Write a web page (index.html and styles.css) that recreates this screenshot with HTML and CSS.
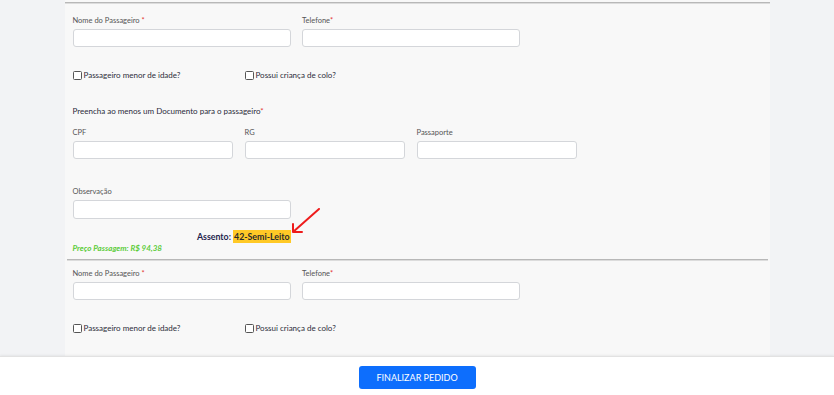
FILE: index.html
```html
<!DOCTYPE html>
<html lang="pt-BR">
<head>
  <meta charset="UTF-8" />
  <meta name="viewport" content="width=device-width, initial-scale=1.0" />
  <title>Dados dos Passageiros</title>
  <link rel="stylesheet" href="styles.css">
</head>

<body>
  <div class="page">

    <div class="content">
      <div class="panel">

        <div class="divider top"></div>

        <!-- Passageiro 1 -->
        <div class="passenger first">
          <div class="row">
            <div class="field col-4">
              <label>Nome do Passageiro <span class="req">*</span></label>
              <input type="text" />
            </div>
            <div class="field col-4">
              <label>Telefone<span class="req">*</span></label>
              <input type="text" />
            </div>
          </div>

          <div class="row checks">
            <label class="check col-3"><input type="checkbox" /> Passageiro menor de idade?</label>
            <label class="check col-3"><input type="checkbox" /> Possui criança de colo?</label>
          </div>

          <p class="doc-title">Preencha ao menos um Documento para o passageiro<span class="req">*</span></p>

          <div class="row">
            <div class="field col-3">
              <label>CPF</label>
              <input type="text" />
            </div>
            <div class="field col-3">
              <label>RG</label>
              <input type="text" />
            </div>
            <div class="field col-3">
              <label>Passaporte</label>
              <input type="text" />
            </div>
          </div>

          <div class="row obs">
            <div class="field col-4">
              <label>Observação</label>
              <input type="text" />
            </div>
          </div>

          <div class="row">
            <div class="seat col-4">
              Assento: <mark>42-Semi-Leito</mark>
              <svg class="arrow" width="34" height="30" viewBox="0 0 34 30">
                <path d="M29 1 L3 24 M3 24 L3 16 M3 24 L12 24" fill="none" stroke="#ee1c1c" stroke-width="2" stroke-linecap="round" />
              </svg>
            </div>
          </div>

          <div class="price">Preço Passagem: R$ 94,38</div>
        </div>

        <div class="divider"></div>

        <!-- Passageiro 2 -->
        <div class="passenger">
          <div class="row">
            <div class="field col-4">
              <label>Nome do Passageiro <span class="req">*</span></label>
              <input type="text" />
            </div>
            <div class="field col-4">
              <label>Telefone<span class="req">*</span></label>
              <input type="text" />
            </div>
          </div>

          <div class="row checks">
            <label class="check col-3"><input type="checkbox" /> Passageiro menor de idade?</label>
            <label class="check col-3"><input type="checkbox" /> Possui criança de colo?</label>
          </div>
        </div>

      </div>
    </div>

    <div class="footer">
      <button>FINALIZAR PEDIDO</button>
    </div>

  </div>
</body>
</html>
```

FILE: styles.css
```css
html, body {
  margin: 0;
  padding: 0;
  height: 100%;
}

body {
  font-family: 'Lato', 'Liberation Sans', sans-serif;
  background-color: #f2f3f5;
  color: #333;
}

.page {
  display: flex;
  flex-direction: column;
  height: 100vh;
}

.content {
  flex: 1;
  overflow: hidden;
}

.panel {
  width: 705px;
  margin: 0 auto;
  background: #f8f8f8;
  min-height: 100%;
  padding-top: 2px;
}

.divider {
  height: 1px;
  background: #b8b8b8;
  box-shadow: 0 1px 0 #dcdcdc;
  margin: 0 2px;
}

.divider.top {
  margin: 0;
}

.passenger {
  padding: 8px 8px 0;
}

.passenger.first {
  padding-top: 12px;
}

.row {
  display: flex;
  gap: 11.5px;
}

.col-4 {
  width: 218px;
}

.col-3 {
  width: 160.5px;
}

.field label {
  display: block;
  font-size: 7.5px;
  line-height: 12px;
  color: #555;
  margin-bottom: 2px;
}

.field input {
  display: block;
  box-sizing: border-box;
  width: 100%;
  height: 18px;
  margin: 0;
  border: 1px solid #d4d6da;
  border-radius: 3px;
  background: #fff;
}

.req {
  color: #e53935;
}

.checks {
  margin-top: 22px;
}

.check {
  display: flex;
  align-items: center;
  font-size: 8px;
  line-height: 12px;
  color: #2d2d3a;
}

.check input {
  appearance: none;
  width: 9px;
  height: 9px;
  margin: 0 2px 0 0;
  border: 1px solid #555;
  border-radius: 1.5px;
  background: #fff;
}

.doc-title {
  margin: 24px 0 10px;
  font-size: 8px;
  line-height: 12px;
  color: #2a2a3a;
}

.obs {
  margin-top: 27px;
}

.obs .field input {
  height: 19px;
}

.seat {
  position: relative;
  margin-top: 12px;
  text-align: right;
  font-size: 8.8px;
  font-weight: 700;
  line-height: 12px;
  color: #1f1f4d;
}

.seat mark {
  background: #ffc926;
  color: #2b2b2b;
  padding: 1px;
}

.arrow {
  position: absolute;
  left: 217px;
  top: -23px;
}

.price {
  font-size: 8px;
  line-height: 10px;
  font-weight: 700;
  font-style: italic;
  color: #5ccc3a;
  margin-bottom: 6px;
}

.footer {
  height: 39px;
  background: #fff;
  border-top: 1px solid #e2e2e2;
  box-shadow: 0 -1px 2px rgba(0,0,0,0.06);
  display: flex;
  justify-content: center;
  align-items: flex-start;
  padding-top: 9px;
  box-sizing: border-box;
}

button {
  width: 117px;
  height: 23px;
  background-color: #0d6efd;
  color: white;
  border: none;
  border-radius: 3px;
  font-family: 'Lato', 'Liberation Sans', sans-serif;
  font-size: 9px;
  cursor: pointer;
}
```
